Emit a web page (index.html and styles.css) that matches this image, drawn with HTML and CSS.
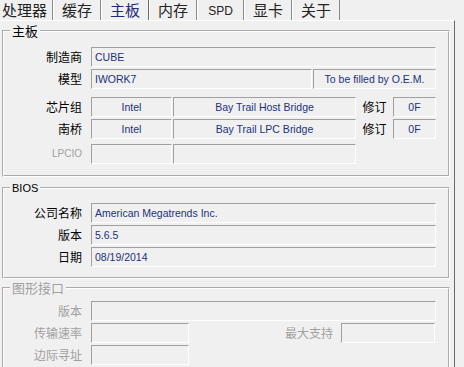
FILE: index.html
```html
<!DOCTYPE html>
<html lang="zh">

<head>
  <meta charset="UTF-8" />
  <meta name="viewport" content="width=device-width, initial-scale=1.0" />
  <title>主板</title>
  <link rel="stylesheet" href="styles.css">
</head>

<body>

  <!-- Tabs -->
  <div class="tabs">
    <div class="tab wide">处理器</div>
    <div class="tab">缓存</div>
    <div class="tab active">主板</div>
    <div class="tab">内存</div>
    <div class="tab spd">SPD</div>
    <div class="tab">显卡</div>
    <div class="tab">关于</div>
  </div>

  <div class="panel">

    <!-- 主板 -->
    <fieldset class="group group-main">
      <legend>主板</legend>
      <div class="row">
        <span class="label">制造商</span>
        <span class="field full">CUBE</span>
      </div>
      <div class="row">
        <span class="label">模型</span>
        <span class="field model">IWORK7</span>
        <span class="field oem center">To be filled by O.E.M.</span>
      </div>
      <div class="row gap-lg">
        <span class="label">芯片组</span>
        <span class="field vendor center">Intel</span>
        <span class="field bridge center">Bay Trail Host Bridge</span>
        <span class="label rev">修订</span>
        <span class="field revno center">0F</span>
      </div>
      <div class="row">
        <span class="label">南桥</span>
        <span class="field vendor center">Intel</span>
        <span class="field bridge center">Bay Trail LPC Bridge</span>
        <span class="label rev">修订</span>
        <span class="field revno center">0F</span>
      </div>
      <div class="row gap-md">
        <span class="label off latin">LPCIO</span>
        <span class="field vendor"></span>
        <span class="field bridge"></span>
      </div>
    </fieldset>

    <!-- BIOS -->
    <fieldset class="group group-bios">
      <legend class="latin">BIOS</legend>
      <div class="row">
        <span class="label">公司名称</span>
        <span class="field full">American Megatrends Inc.</span>
      </div>
      <div class="row">
        <span class="label">版本</span>
        <span class="field full">5.6.5</span>
      </div>
      <div class="row">
        <span class="label">日期</span>
        <span class="field full">08/19/2014</span>
      </div>
    </fieldset>

    <!-- 图形接口 -->
    <fieldset class="group group-gfx">
      <legend class="off">图形接口</legend>
      <div class="row">
        <span class="label off">版本</span>
        <span class="field full"></span>
      </div>
      <div class="row">
        <span class="label off">传输速率</span>
        <span class="field short"></span>
        <span class="label off mid">最大支持</span>
        <span class="field maxbus"></span>
      </div>
      <div class="row">
        <span class="label off">边际寻址</span>
        <span class="field short"></span>
      </div>
    </fieldset>

  </div>

</body>

</html>
```

FILE: styles.css
```css
body {
  margin: 0;
  padding: 0;
  width: 464px;
  height: 367px;
  overflow: hidden;
  background: #f0f0f0;
  font-family: "Noto Sans CJK SC", sans-serif;
  color: #000;
}

/* tabs */
.tabs {
  display: flex;
  height: 20px;
}

.tab {
  box-sizing: border-box;
  width: 48px;
  height: 20px;
  line-height: 19px;
  font-size: 15px;
  text-align: center;
  color: #222;
  border-left: 1px solid #fff;
  border-right: 1px solid #8a8a8a;
}

.tab.wide {
  width: 53px;
  border-left: none;
  text-align: left;
  padding-left: 2px;
}

.tab.spd {
  width: 47px;
  font-family: "Liberation Sans", sans-serif;
  font-size: 12px;
  line-height: 22px;
}

.tab.active {
  color: #1c2a7c;
  background: #f0f0f0;
  border-right-color: #6a6a6a;
}

/* panel */
.panel {
  box-sizing: border-box;
  width: 455px;
  height: 347px;
  border-top: 1px solid #fff;
  border-right: 1px solid #6a6a6a;
  padding-left: 2px;
}

.group {
  box-sizing: border-box;
  width: 448px;
  margin: 0;
  padding: 0;
  border: 2px groove #fff;
  min-width: 0;
}

.group legend {
  font-size: 13px;
  line-height: 14px;
  padding: 0 2px;
  margin-left: 6px;
}

.group legend.latin {
  font-family: "Liberation Sans", sans-serif;
  font-size: 11px;
}

.group-main {
  margin-top: 3px;
  padding: 9px 0 11px;
}

.group-bios {
  margin-top: 4px;
  padding: 8px 0 10px;
}

.group-gfx {
  margin-top: 2px;
  padding: 6px 0 10px;
}

.off {
  color: #a0a0a0;
}

/* rows */
.row {
  display: flex;
  align-items: center;
  height: 20px;
  margin-top: 2px;
}

.row:first-of-type {
  margin-top: 0;
}

.row.gap-lg {
  margin-top: 8px;
}

.row.gap-md {
  margin-top: 5px;
}

.label {
  box-sizing: border-box;
  width: 78px;
  margin-right: 9px;
  font-size: 12px;
  line-height: 20px;
  text-align: right;
  white-space: nowrap;
}

.label.latin {
  font-family: "Liberation Sans", sans-serif;
  font-size: 10px;
}

.label.rev {
  width: 37px;
  margin-right: 0;
  text-align: center;
}

.label.mid {
  width: 152px;
  margin-right: 0;
  padding-right: 8px;
}

.field {
  box-sizing: border-box;
  height: 20px;
  border: 1px solid;
  border-color: #a0a0a0 #fff #fff #a0a0a0;
  font-family: "Liberation Sans", sans-serif;
  font-size: 10.5px;
  line-height: 18px;
  color: #22307c;
  padding-left: 3px;
  white-space: nowrap;
  overflow: hidden;
}

.field.center {
  text-align: center;
  padding-left: 0;
}

.field.full {
  width: 345px;
}

.field.model {
  width: 221px;
  margin-right: 1px;
}

.field.oem {
  width: 123px;
}

.field.vendor {
  width: 81px;
  margin-right: 1px;
}

.field.bridge {
  width: 183px;
}

.field.revno {
  width: 43px;
}

.field.short {
  width: 98px;
}

.field.maxbus {
  width: 94px;
}
```
